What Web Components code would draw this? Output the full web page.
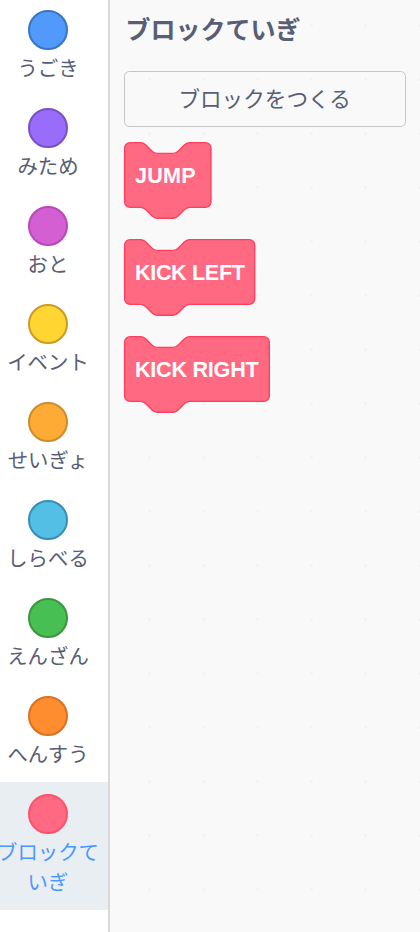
<!DOCTYPE html>
<html lang="ja">
<head>
<meta charset="utf-8">
<title>ブロックていぎ</title>
<style>
html, body { margin: 0; height: 100%; overflow: hidden; }
body { font-family: "Liberation Sans", "Noto Sans CJK JP", sans-serif; color: #575e75; }
</style>
</head>
<body>
<block-editor></block-editor>
<script>
class CategoryItem extends HTMLElement {
  constructor() {
    super();
    this.attachShadow({ mode: 'open' }).innerHTML = `
      <style>
        :host { display: flex; flex-direction: column; align-items: flex-start; box-sizing: border-box; width: 108px; padding: 12px 0 14px; }
        :host([selected]) { background: #e9eef2; color: #4c97ff; }
        .dot { box-sizing: border-box; width: 40px; height: 40px; margin-left: 28px; border: 2px solid var(--edge); border-radius: 50%; background: var(--fill); }
        .label { width: 102px; margin: 2px 0 0 -3px; font: 20.4px/30px "Noto Sans CJK JP", sans-serif; text-align: center; word-break: break-all; }
      </style>
      <div class="dot"></div><div class="label"><slot></slot></div>`;
  }
  connectedCallback() {
    this.style.setProperty('--fill', this.getAttribute('fill'));
    this.style.setProperty('--edge', this.getAttribute('edge'));
  }
}
customElements.define('category-item', CategoryItem);

class CategoryMenu extends HTMLElement {
  constructor() {
    super();
    this.attachShadow({ mode: 'open' }).innerHTML = `
      <style>
        :host { display: flex; flex-direction: column; box-sizing: border-box; width: 110px; border-right: 2px solid #d9d9d9; background: #fff; }
        .list { display: flex; flex-direction: column; margin-top: -2px; }
      </style>
      <div class="list"><slot></slot></div>`;
  }
}
customElements.define('category-menu', CategoryMenu);

class MakeButton extends HTMLElement {
  constructor() {
    super();
    this.attachShadow({ mode: 'open' }).innerHTML = `
      <style>
        :host { display: block; }
        button { display: block; box-sizing: border-box; width: 282px; height: 56px; padding: 0 0 3px; border: 1.35px solid #c6c6c6; border-radius: 5.4px; background: transparent; color: inherit; font: 21.6px/30px "Noto Sans CJK JP", sans-serif; }
      </style>
      <button><slot></slot></button>`;
  }
}
customElements.define('make-button', MakeButton);

class StackBlock extends HTMLElement {
  connectedCallback() {
    const w = Number(this.getAttribute('width'));
    this.attachShadow({ mode: 'open' }).innerHTML = `
      <style>
        :host { display: grid; width: ${(w + 1) * 1.35}px; height: 77px; }
        svg, .text { grid-area: 1 / 1; }
        svg { display: block; overflow: visible; }
        .text { padding: 21px 0 0 11px; color: #fff; font: bold 21.6px/26px "Liberation Sans", sans-serif; letter-spacing: ${this.getAttribute('tracking') || 0}px; white-space: nowrap; }
      </style>
      <svg width="${(w + 1) * 1.35}" height="77">
        <path transform="translate(.6 .6) scale(1.35)" fill="#ff6982" stroke="#ff3f5d"
          d="M0,4 A4,4 0 0,1 4,0 H12 c2,0 3,1 4,2 l4,4 c1,1 2,2 4,2 h12 c2,0 3,-1 4,-2 l4,-4 c1,-1 2,-2 4,-2 H${w - 4} a4,4 0 0,1 4,4 V44 a4,4 0 0,1 -4,4 H48 c-2,0 -3,1 -4,2 l-4,4 c-1,1 -2,2 -4,2 h-12 c-2,0 -3,-1 -4,-2 l-4,-4 c-1,-1 -2,-2 -4,-2 H4 a4,4 0 0,1 -4,-4 z"/>
      </svg>
      <div class="text"><slot></slot></div>`;
  }
}
customElements.define('stack-block', StackBlock);

class BlockFlyout extends HTMLElement {
  constructor() {
    super();
    this.attachShadow({ mode: 'open' }).innerHTML = `
      <style>
        :host { display: flex; flex: 1; flex-direction: column; box-sizing: border-box; padding: 10px 0 0 13.6px; background: #f9f9f9 radial-gradient(circle at 39.5px 25.5px, #f1f1f1 .9px, transparent 1.6px) 0 0 / 54px 54px; }
        h2 { margin: 0 0 25px 1.8px; font: bold 25px/36px "Noto Sans CJK JP", sans-serif; }
        .blocks { display: flex; flex-direction: column; gap: 20.2px; margin-top: 15px; padding-left: .4px; }
      </style>
      <h2><slot name="title"></slot></h2>
      <slot name="action"></slot>
      <div class="blocks"><slot></slot></div>`;
  }
}
customElements.define('block-flyout', BlockFlyout);

class BlockEditor extends HTMLElement {
  constructor() {
    super();
    this.attachShadow({ mode: 'open' }).innerHTML = `
      <style>:host { display: flex; width: 420px; height: 932px; overflow: hidden; }</style>
      <category-menu>
        <category-item fill="#5199fb" edge="#3874c7">うごき</category-item>
        <category-item fill="#996cfb" edge="#7750c5">みため</category-item>
        <category-item fill="#d45fd3" edge="#bb48bb">おと</category-item>
        <category-item fill="#ffd532" edge="#ca9a25">イベント</category-item>
        <category-item fill="#fdab34" edge="#cd8c2c">せいぎょ</category-item>
        <category-item fill="#53bfe4" edge="#368eb6">しらべる</category-item>
        <category-item fill="#48bf53" edge="#3e943f">えんざん</category-item>
        <category-item fill="#fe8d30" edge="#da7123">へんすう</category-item>
        <category-item fill="#ff6982" edge="#ff516c" selected>ブロックていぎ</category-item>
      </category-menu>
      <block-flyout>
        <span slot="title">ブロックていぎ</span>
        <make-button slot="action">ブロックをつくる</make-button>
        <stack-block width="64" tracking="0.2">JUMP</stack-block>
        <stack-block width="96.4" tracking="-0.35">KICK LEFT</stack-block>
        <stack-block width="107.2" tracking="-0.25">KICK RIGHT</stack-block>
      </block-flyout>`;
  }
}
customElements.define('block-editor', BlockEditor);
</script>
</body>
</html>
